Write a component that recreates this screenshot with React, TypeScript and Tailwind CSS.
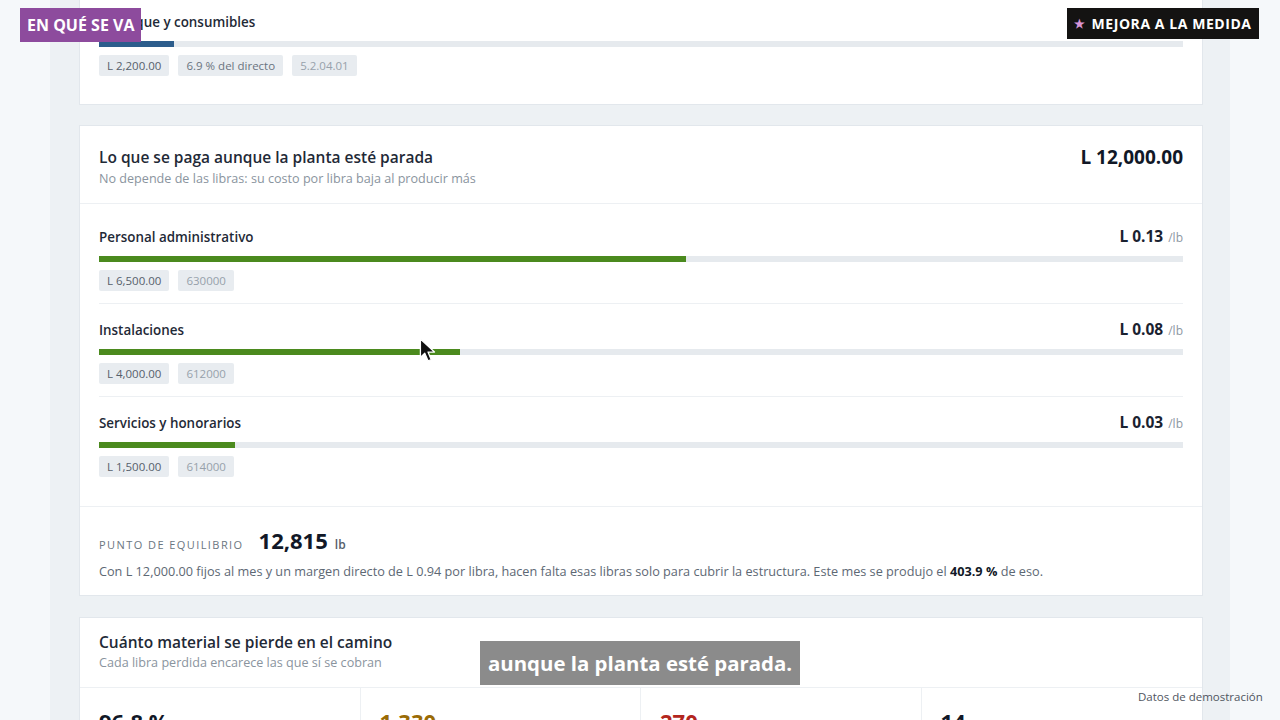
import React from 'react'

type Cost = {
  name: string
  perLb: string
  pct: number
  tags: { text: string; tone: 'dark' | 'mid' | 'light' }[]
  color: string
}

const fixedCosts: Cost[] = [
  {
    name: 'Personal administrativo',
    perLb: 'L 0.13',
    pct: 54.17,
    tags: [
      { text: 'L 6,500.00', tone: 'dark' },
      { text: '630000', tone: 'light' },
    ],
    color: 'bg-[#4b8a1e]',
  },
  {
    name: 'Instalaciones',
    perLb: 'L 0.08',
    pct: 33.33,
    tags: [
      { text: 'L 4,000.00', tone: 'dark' },
      { text: '612000', tone: 'light' },
    ],
    color: 'bg-[#4b8a1e]',
  },
  {
    name: 'Servicios y honorarios',
    perLb: 'L 0.03',
    pct: 12.5,
    tags: [
      { text: 'L 1,500.00', tone: 'dark' },
      { text: '614000', tone: 'light' },
    ],
    color: 'bg-[#4b8a1e]',
  },
]

const toneClass = {
  dark: 'text-[#56606b]',
  mid: 'text-[#6a7480]',
  light: 'text-[#97a1ab]',
}

function Tag({ text, tone }: { text: string; tone: 'dark' | 'mid' | 'light' }) {
  return (
    <span className={`h-[21px] px-[8px] bg-[#e8ecf0] rounded-[2px] text-[11.5px] leading-[21px] ${toneClass[tone]}`}>
      {text}
    </span>
  )
}

function PerLb({ value }: { value: string }) {
  return (
    <span className="leading-[22px]">
      <span className="text-[15.5px] font-bold text-[#1a2230]">{value}</span>
      <span className="text-[12px] text-[#8d97a2] ml-[5px]">/lb</span>
    </span>
  )
}

function CostRow({ row }: { row: Cost }) {
  return (
    <div className="pt-[14px] pb-[12px]">
      <div className="flex items-baseline justify-between h-[22px]">
        <span className="text-[13.4px] leading-[22px] font-semibold text-[#1f2a37]">{row.name}</span>
        <PerLb value={row.perLb} />
      </div>
      <div className="mt-[9px] h-[6px] bg-[#e6eaee]">
        <div className={`h-full ${row.color}`} style={{ width: `${row.pct}%` }} />
      </div>
      <div className="mt-[8px] flex gap-[9px]">
        {row.tags.map((t) => (
          <Tag key={t.text} text={t.text} tone={t.tone} />
        ))}
      </div>
    </div>
  )
}

function Cursor() {
  return (
    <svg className="absolute left-[419px] top-[338px]" width="18" height="26" viewBox="0 0 16 24">
      <path
        d="M1 1 L1 18 L5 14 L8 21 L11 20 L8 13 L14 13 Z"
        fill="#111"
        stroke="#fff"
        strokeWidth="1.2"
        strokeLinejoin="round"
      />
    </svg>
  )
}

export default function App() {
  return (
    <div className="relative h-[720px] overflow-hidden bg-[#f5f8fa] font-['Open_Sans','Noto_Sans',sans-serif]">
      <div className="ml-[50px] w-[1180px] h-full bg-[#edf1f4] pl-[29px] pr-[27px]">
        <div className="flex flex-col">
          {/* tail of the variable-cost card */}
          <div className="-mt-[4px] bg-white border-x border-b border-[#e2e7ec]">
            <div className="px-[19px] pb-[16px]">
              <div className="pt-[14px] pb-[12px]">
                <div className="flex items-baseline justify-between h-[22px]">
                  <span className="text-[13.4px] leading-[22px] font-semibold text-[#1f2a37]">Empaque y consumibles</span>
                  <PerLb value="L 0.02" />
                </div>
                <div className="mt-[9px] h-[6px] bg-[#e6eaee]">
                  <div className="h-full bg-[#2c5d8c]" style={{ width: '6.9%' }} />
                </div>
                <div className="mt-[8px] flex gap-[9px]">
                  <Tag text="L 2,200.00" tone="dark" />
                  <Tag text="6.9 % del directo" tone="mid" />
                  <Tag text="5.2.04.01" tone="light" />
                </div>
              </div>
            </div>
          </div>

          {/* fixed costs */}
          <div className="mt-5 bg-white border border-[#e2e7ec]">
            <div className="flex justify-between items-start px-[19px] pt-[20px] pb-[14px] border-b border-[#edf0f3]">
              <div>
                <div className="text-[15.5px] leading-[22px] font-semibold text-[#1f2a37]">
                  Lo que se paga aunque la planta esté parada
                </div>
                <div className="mt-[1px] text-[12.6px] leading-[20px] text-[#8a949e]">
                  No depende de las libras: su costo por libra baja al producir más
                </div>
              </div>
              <div className="text-[19px] leading-[22px] font-bold text-[#111827]">L 12,000.00</div>
            </div>
            <div className="px-[19px] pt-[7px] pb-[17px] divide-y divide-[#edf0f3]">
              {fixedCosts.map((r) => (
                <CostRow key={r.name} row={r} />
              ))}
            </div>
            <div className="px-[19px] pt-[17px] pb-[14px] border-t border-[#edf0f3]">
              <div className="flex items-baseline h-[30px]">
                <span className="text-[11px] tracking-[0.13em] text-[#6b7681] uppercase">Punto de equilibrio</span>
                <span className="ml-[15px] text-[22px] font-bold text-[#111827]">12,815</span>
                <span className="ml-[7px] text-[12px] font-semibold text-[#56606b]">lb</span>
              </div>
              <p className="mt-[7px] text-[12.7px] leading-[20px] text-[#5d6874]">
                Con L 12,000.00 fijos al mes y un margen directo de L 0.94 por libra, hacen falta esas libras solo para
                cubrir la estructura. Este mes se produjo el <b className="text-[#111827]">403.9 %</b> de eso.
              </p>
            </div>
          </div>

          {/* material loss */}
          <div className="mt-[21px] bg-white border border-[#e2e7ec]">
            <div className="px-[19px] pt-[13px] pb-[14px] border-b border-[#edf0f3]">
              <div className="text-[15.5px] leading-[22px] font-semibold text-[#1f2a37]">
                Cuánto material se pierde en el camino
              </div>
              <div className="text-[12.6px] leading-[20px] text-[#8a949e]">
                Cada libra perdida encarece las que sí se cobran
              </div>
            </div>
            <div className="grid grid-cols-4 divide-x divide-[#edf0f3]">
              <div className="px-[19px] pt-[19px] pb-4 text-[22px] leading-[28px] font-bold text-[#111827]">96.8 %</div>
              <div className="px-[19px] pt-[19px] pb-4 text-[22px] leading-[28px] font-bold text-[#9a6b05]">1,330</div>
              <div className="px-[19px] pt-[19px] pb-4 text-[22px] leading-[28px] font-bold text-[#b3261e]">270</div>
              <div className="px-[19px] pt-[19px] pb-4 text-[22px] leading-[28px] font-bold text-[#111827]">14</div>
            </div>
          </div>
        </div>
      </div>

      {/* overlays */}
      <div className="absolute left-[20px] top-[8px] h-[34px] px-[7px] bg-[#8d4b9d] text-white text-[16px] leading-[34px] font-bold">
        EN QUÉ SE VA
      </div>
      <div className="absolute left-[1067px] top-[8px] h-[31px] px-[7px] bg-[#141312] text-white text-[14px] leading-[31px] font-bold tracking-[0.04em] flex items-center gap-[6px]">
        <span className="text-[#d995d6] text-[12px]">★</span>
        MEJORA A LA MEDIDA
      </div>
      <div className="absolute left-[480px] top-[641px] h-[44px] px-[8px] bg-[#8b8b8b] text-white text-[20.4px] leading-[44px] font-bold">
        aunque la planta esté parada.
      </div>
      <div className="absolute left-[1138px] top-[688px] text-[11.5px] leading-[18px] text-[#4f5560]">
        Datos de demostración
      </div>
      <Cursor />
    </div>
  )
}
